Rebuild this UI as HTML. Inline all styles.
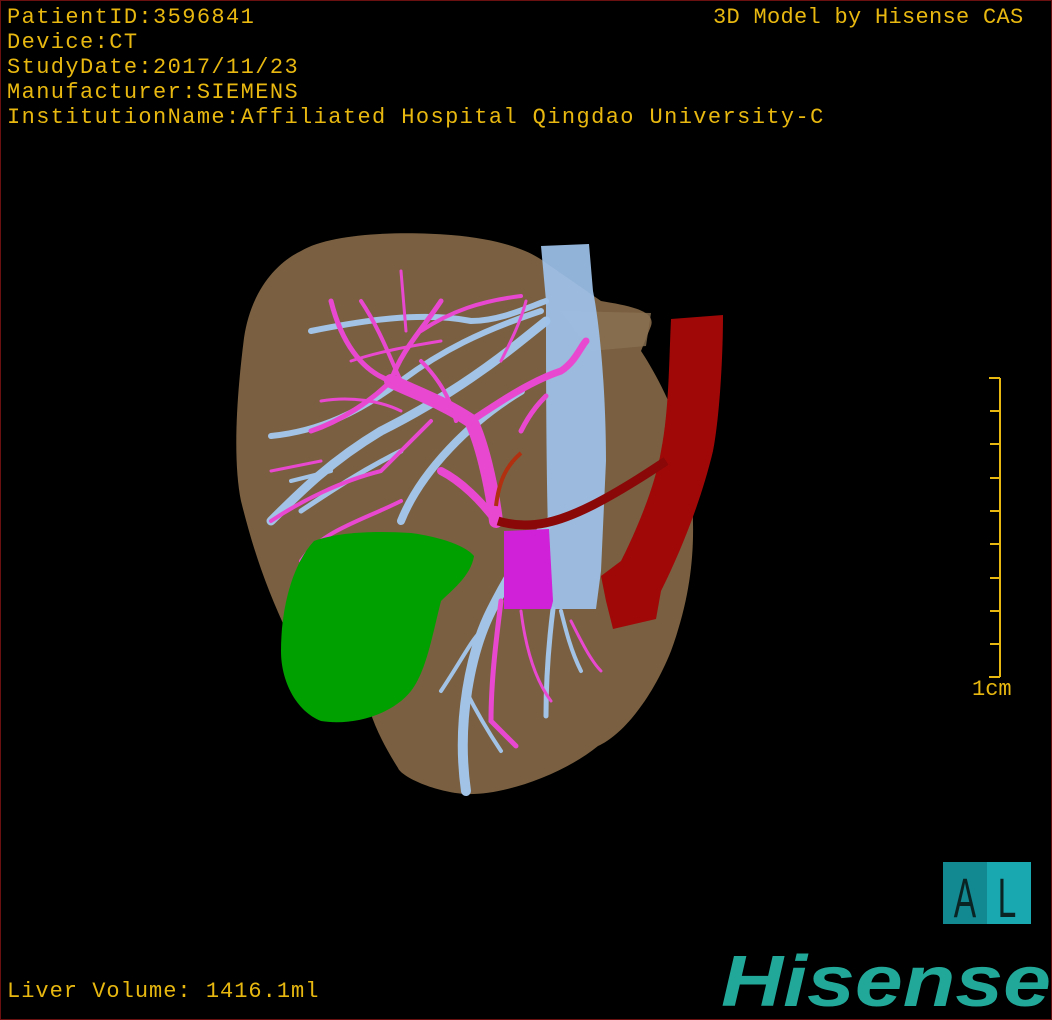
<!DOCTYPE html>
<html><head><meta charset="utf-8"><style>
html,body{margin:0;padding:0;background:#000;}
#s{position:relative;width:1052px;height:1020px;background:#000;overflow:hidden;box-sizing:border-box;border:1px solid #6a1010;}
.t{position:absolute;font-family:"Liberation Mono",monospace;font-size:22px;color:#e8b810;white-space:pre;line-height:25px;}
</style></head><body><div id="s">
<svg width="1052" height="1020" style="position:absolute;left:0;top:0">
<!-- liver -->
<path d="M243,337 C250,290 275,262 300,250 C330,232 400,230 450,234 C500,238 530,250 545,262 L600,300 C630,305 655,310 650,325 L640,350 C660,380 690,440 690,487 C695,540 692,590 670,650 C650,700 620,735 597,745 C560,775 500,795 463,793 C430,790 400,775 397,767 C380,740 365,710 363,680 L300,660 C270,600 255,560 240,500 C232,460 235,400 243,337 Z" fill="#7a6040"/>
<path d="M560,310 L650,312 L645,345 L590,350 Z" fill="#8a7050" opacity="0.8"/>
<!-- blue vessels -->
<g stroke="#a2c2e6" fill="none" stroke-linecap="round">
<path d="M270,520 C300,490 330,460 380,430 C420,410 470,380 520,340 L545,320" stroke-width="9"/>
<path d="M310,330 C360,320 420,310 470,320 C500,320 530,305 545,300" stroke-width="6"/>
<path d="M270,435 C320,430 360,410 400,380 C440,350 480,330 540,310" stroke-width="6"/>
<path d="M400,520 C420,470 470,420 520,390" stroke-width="8"/>
<path d="M300,510 C330,490 360,470 400,450" stroke-width="5"/>
<path d="M465,790 C455,720 470,650 490,610 C510,570 530,540 550,520" stroke-width="10"/>
<path d="M440,690 C460,660 470,640 480,630" stroke-width="4"/>
<path d="M500,750 C480,720 470,700 465,690" stroke-width="4"/>
<path d="M545,715 C545,680 548,640 552,608" stroke-width="5"/>
<path d="M580,670 C570,650 565,630 560,610" stroke-width="4"/>
<path d="M330,470 L290,480" stroke-width="4"/>
</g>
<!-- IVC -->
<path d="M540,245 L588,243 L592,290 C600,330 605,400 605,460 L600,570 L595,608 L550,608 L548,570 C545,470 545,380 545,300 Z" fill="#9ec2ea" opacity="0.92"/>
<!-- pink vessels -->
<g stroke="#e848d0" fill="none" stroke-linecap="round">
<path d="M495,520 C490,480 480,440 470,420 C440,400 410,390 390,380" stroke-width="14"/>
<path d="M470,420 C500,400 530,380 560,370 C575,360 580,345 585,340" stroke-width="7"/>
<path d="M330,300 C340,340 360,370 390,380 C400,350 420,330 440,300" stroke-width="5"/>
<path d="M390,380 C370,400 340,420 310,430" stroke-width="5"/>
<path d="M270,520 C300,500 340,480 380,470 C400,450 420,430 430,420" stroke-width="4"/>
<path d="M300,560 C320,530 360,520 400,500" stroke-width="4"/>
<path d="M360,300 C380,330 390,360 400,380" stroke-width="4"/>
<path d="M400,270 L405,330" stroke-width="3"/>
<path d="M420,330 C450,310 480,300 520,295" stroke-width="4"/>
<path d="M440,470 C460,480 480,500 495,520" stroke-width="8"/>
<path d="M520,430 C530,410 540,400 545,395" stroke-width="5"/>
<path d="M500,600 C495,640 490,680 490,720 L515,745" stroke-width="5"/>
<path d="M520,610 C525,650 535,680 550,700" stroke-width="3"/>
<path d="M570,620 C580,640 590,660 600,670" stroke-width="3"/>
<path d="M270,470 L320,460" stroke-width="3"/>
<path d="M350,360 C380,350 410,345 440,340" stroke-width="3"/>
<path d="M320,400 C350,395 380,400 400,410" stroke-width="3"/>
<path d="M420,360 C440,380 450,400 455,420" stroke-width="4"/>
<path d="M500,360 C510,340 520,320 525,300" stroke-width="3"/>
</g>
<!-- magenta block -->
<path d="M503,530 L548,528 L552,600 L550,608 L503,608 Z" fill="#d020d8"/>
<!-- red aorta -->
<path d="M670,318 L722,314 C722,360 718,420 712,450 C700,500 680,550 660,590 L655,618 L612,628 L605,600 L600,575 L620,560 C640,520 655,480 660,450 C668,410 668,360 670,318 Z" fill="#a00808"/>
<path d="M497,520 C530,530 560,520 590,505 C620,490 650,470 665,460" stroke="#8a0808" stroke-width="9" fill="none"/>
<path d="M495,505 C498,480 505,465 520,452" stroke="#b03010" stroke-width="4" fill="none"/>
<!-- gallbladder -->
<path d="M313,540 C340,530 380,530 410,532 C440,536 465,545 473,555 C470,575 450,590 440,600 C430,640 425,670 410,690 C390,715 350,725 320,720 C295,710 280,680 280,650 C280,610 290,565 313,540 Z" fill="#00a000"/>
<!-- scale bar -->
<g stroke="#e8b810" stroke-width="2">
<line x1="999" y1="377" x2="999" y2="676"/>
<line x1="988" y1="377" x2="999" y2="377"/><line x1="989" y1="410" x2="999" y2="410"/><line x1="989" y1="443" x2="999" y2="443"/><line x1="989" y1="477" x2="999" y2="477"/><line x1="989" y1="510" x2="999" y2="510"/><line x1="989" y1="543" x2="999" y2="543"/><line x1="989" y1="577" x2="999" y2="577"/><line x1="989" y1="610" x2="999" y2="610"/><line x1="989" y1="643" x2="999" y2="643"/><line x1="988" y1="676" x2="999" y2="676"/>
</g>
<!-- AL -->
<rect x="942" y="861" width="88" height="62" fill="#1aa8b0"/>
<rect x="942" y="861" width="44" height="62" fill="#128890"/>
<text x="964" y="916" font-family="Liberation Sans, sans-serif" font-size="56" fill="#0a2424" text-anchor="middle" transform="translate(964 0) scale(0.6 1) translate(-964 0)">A</text>
<text x="1006" y="916" font-family="Liberation Sans, sans-serif" font-size="56" fill="#0a2424" text-anchor="middle" transform="translate(1006 0) scale(0.6 1) translate(-1006 0)">L</text>
<text x="720" y="1005" font-family="Liberation Sans, sans-serif" font-weight="bold" font-style="italic" font-size="72" fill="#22a898" textLength="330" lengthAdjust="spacingAndGlyphs">Hisense</text>
</svg>
<div class="t" style="left:6px;top:4px;letter-spacing:1.4px">PatientID:3596841
Device:CT
StudyDate:2017/11/23
Manufacturer:SIEMENS
InstitutionName:Affiliated Hospital Qingdao University-C</div>
<div class="t" style="left:712px;top:4px;letter-spacing:0.3px">3D Model by Hisense CAS</div>
<div class="t" style="left:6px;top:978px;letter-spacing:1px">Liver Volume: 1416.1ml</div>
<div class="t" style="left:971px;top:676px;letter-spacing:0px">1cm</div>
</div></body></html>
